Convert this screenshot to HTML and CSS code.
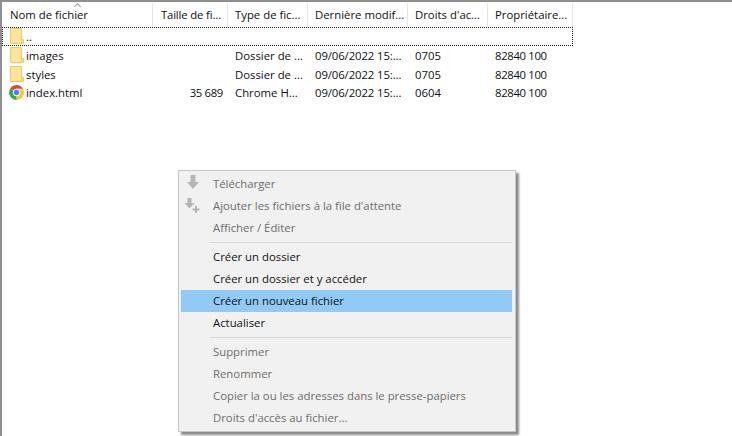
FILE: index.html
```html
<!DOCTYPE html>
<html lang="fr">
<head>
<meta charset="utf-8">
<title>Fichiers</title>
<link rel="stylesheet" href="styles.css">
</head>
<body>
<svg class="defs" width="0" height="0" aria-hidden="true">
  <symbol id="folder" viewBox="0 0 14 16">
    <path d="M.5.5H11.500V15.500H.5Z" fill="#fde49c" stroke="#eec860"/>
    <path d="M11.500 11.500H13.500V15.500H11.500Z" fill="#fde49c" stroke="#eec860"/>
  </symbol>
</svg>
<main class="list">
  <div class="head row-grid">
    <div class="hcell first">Nom de fichier<span class="sort"></span></div>
    <div class="hcell num">Taille de fi...</div>
    <div class="hcell">Type de fic...</div>
    <div class="hcell">Dernière modif...</div>
    <div class="hcell">Droits d'ac...</div>
    <div class="hcell">Propriétaire...</div>
  </div>
  <div class="row row-grid focus">
    <div class="cell name"><svg class="ico" width="14" height="16"><use href="#folder"/></svg><span>..</span></div>
    <div class="cell"></div><div class="cell"></div><div class="cell"></div><div class="cell"></div><div class="cell"></div>
  </div>
  <div class="row row-grid">
    <div class="cell name"><svg class="ico" width="14" height="16"><use href="#folder"/></svg><span>images</span></div>
    <div class="cell"></div>
    <div class="cell">Dossier de ...</div>
    <div class="cell date">09/06/2022 15:...</div>
    <div class="cell">0705</div>
    <div class="cell digits">82840 100</div>
  </div>
  <div class="row row-grid short">
    <div class="cell name"><svg class="ico" width="14" height="16"><use href="#folder"/></svg><span>styles</span></div>
    <div class="cell"></div>
    <div class="cell">Dossier de ...</div>
    <div class="cell date">09/06/2022 15:...</div>
    <div class="cell">0705</div>
    <div class="cell digits">82840 100</div>
  </div>
  <div class="row row-grid">
    <div class="cell name">
      <svg class="ico chrome" width="15" height="15" viewBox="0 0 14 14">
        <path d="M7 7 1 3.54A7 7 0 0 1 13.06 3.5H7Z" fill="#e3453a"/>
        <path d="M7 7 13.06 3.5A7 7 0 0 1 7 14Z" fill="#fbc82e"/>
        <path d="M7 7 7 14A7 7 0 0 1 1 3.54Z" fill="#3aa757"/>
        <circle cx="7" cy="7" r="3.4" fill="#fff"/>
        <circle cx="7" cy="7" r="2.6" fill="#4285f4"/>
      </svg><span>index.html</span></div>
    <div class="cell num digits">35 689</div>
    <div class="cell">Chrome H...</div>
    <div class="cell date">09/06/2022 15:...</div>
    <div class="cell">0604</div>
    <div class="cell digits">82840 100</div>
  </div>
</main>
<nav class="menu">
  <div class="item off"><svg class="micon down" width="16" height="16" viewBox="0 0 16 16"><path d="M5.500 1H10.500V8H14L8 15 2 8H5.500Z" fill="#b5b5b5"/></svg><span>Télécharger</span></div>
  <div class="item off"><svg class="micon add" width="16" height="16" viewBox="0 0 16 16"><path d="M3.500 0H7.500V5H10.500L5.500 10.500.5 5H3.500Z" fill="#b5b5b5"/><path d="M11 8H13V10.500H15.500V12.500H13V15H11V12.500H8.500V10.500H11Z" fill="#b5b5b5"/></svg><span>Ajouter les fichiers à la file d'attente</span></div>
  <div class="item off"><span>Afficher / Éditer</span></div>
  <div class="sep"></div>
  <div class="item"><span>Créer un dossier</span></div>
  <div class="item"><span>Créer un dossier et y accéder</span></div>
  <div class="item hot"><span>Créer un nouveau fichier</span></div>
  <div class="item"><span>Actualiser</span></div>
  <div class="sep"></div>
  <div class="item off"><span>Supprimer</span></div>
  <div class="item off"><span>Renommer</span></div>
  <div class="item off"><span>Copier la ou les adresses dans le presse-papiers</span></div>
  <div class="item off"><span>Droits d'accès au fichier...</span></div>
</nav>
</body>
</html>
```
FILE: styles.css
```css
* { box-sizing: border-box; }
html, body { margin: 0; height: 100%; }
body {
  width: 732px;
  height: 436px;
  overflow: hidden;
  position: relative;
  background: #fff;
  color: #101010;
  font: 11.35px/16px "Open Sans", "Noto Sans", "Liberation Sans", sans-serif;
}
.defs { position: absolute; }
.list {
  height: 436px;
  border-top: 2px solid #8f8f8f;
  border-left: 2px solid #8f8f8f;
}
.row-grid {
  display: grid;
  grid-template-columns: 151px 75px 80px 100px 80px 85px;
  width: 571px;
}
.head { height: 24px; margin-top: 1px; }
.hcell {
  position: relative;
  padding: 4px 6px 0 7px;
  border-right: 1px solid #e5e5e5;
  white-space: nowrap;
}
.hcell.first { padding-left: 8px; }
.hcell.num { text-align: right; padding-right: 6px; letter-spacing: -.15px; }
.sort {
  position: absolute;
  left: 73px;
  top: 1px;
  width: 5px;
  height: 5px;
  border-top: 1px solid #9a9a9a;
  border-left: 1px solid #9a9a9a;
  transform: rotate(45deg);
}
.row { height: 19px; }
.row.short { height: 18px; }
.row.focus { outline: 1px dotted #222; outline-offset: -1px; }
.cell {
  padding: 2px 6px 0 7px;
  white-space: nowrap;
  overflow: hidden;
}
.cell.num { text-align: right; padding-right: 5px; }
.cell.date { letter-spacing: -.1px; }
.cell.digits { letter-spacing: -.35px; }
.cell.name {
  display: flex;
  align-items: flex-start;
  gap: 2px;
  padding: 1px 0 0 8px;
}
.cell.name span { padding-top: 1px; }
.ico { flex: none; }
.ico.chrome { margin: 1px 0 0 -1px; }
.menu {
  position: absolute;
  left: 178px;
  top: 170px;
  width: 338px;
  height: 262px;
  padding: 2px 3px 3px 2px;
  background: #f1f1f1;
  border: 1px solid #c8c8c8;
  box-shadow: 3px 3px 2px rgba(0, 0, 0, .45);
}
.item {
  position: relative;
  height: 22px;
  line-height: 21px;
  padding-left: 32px;
  white-space: nowrap;
  color: #111;
}
.item.off { color: #6d6d6d; }
.item.hot { background: #91c9f7; }
.micon { position: absolute; }
.micon.down { left: 4px; top: 1px; }
.micon.add { left: 3px; top: 3px; }
.sep {
  height: 1px;
  margin: 3px 0 3px 29px;
  background: #d7d7d7;
}
```
